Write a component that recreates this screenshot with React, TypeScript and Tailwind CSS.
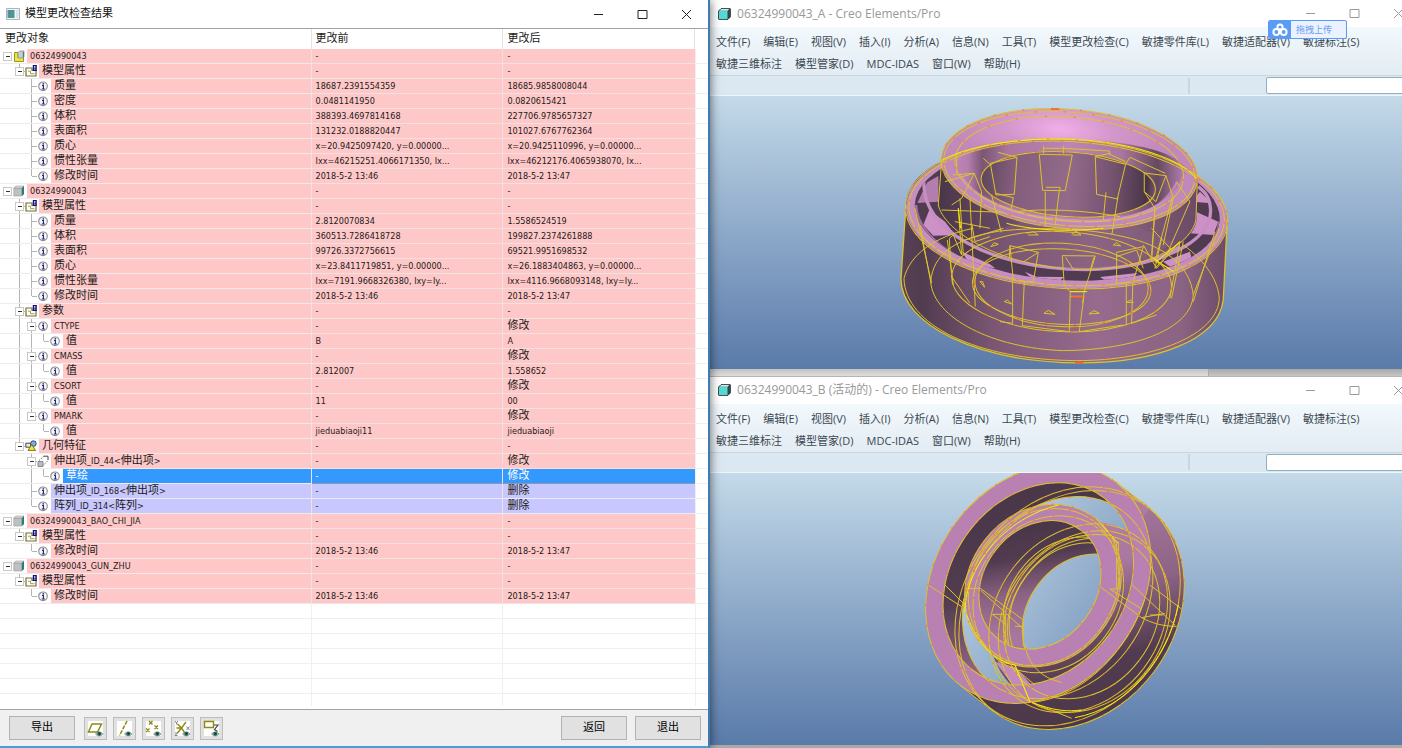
import React from "react";

type Kind = "asm" | "part" | "props" | "info" | "geom" | "extrude";
type Row = {
  level: number;
  kind: Kind;
  name: string;
  before: string;
  after: string;
  state?: "selected" | "removed";
};

const r = (
  level: number,
  kind: Kind,
  name: string,
  before = "-",
  after = "-",
  state?: "selected" | "removed"
): Row => ({ level, kind, name, before, after, state });

const rows: Row[] = [
  r(0, "asm", "06324990043"),
  r(1, "props", "模型属性"),
  r(2, "info", "质量", "18687.2391554359", "18685.9858008044"),
  r(2, "info", "密度", "0.0481141950", "0.0820615421"),
  r(2, "info", "体积", "388393.4697814168", "227706.9785657327"),
  r(2, "info", "表面积", "131232.0188820447", "101027.6767762364"),
  r(2, "info", "质心", "x=20.9425097420, y=0.00000...", "x=20.9425110996, y=0.00000..."),
  r(2, "info", "惯性张量", "Ixx=46215251.4066171350, Ix...", "Ixx=46212176.4065938070, Ix..."),
  r(2, "info", "修改时间", "2018-5-2 13:46", "2018-5-2 13:47"),
  r(0, "part", "06324990043"),
  r(1, "props", "模型属性"),
  r(2, "info", "质量", "2.8120070834", "1.5586524519"),
  r(2, "info", "体积", "360513.7286418728", "199827.2374261888"),
  r(2, "info", "表面积", "99726.3372756615", "69521.9951698532"),
  r(2, "info", "质心", "x=23.8411719851, y=0.00000...", "x=26.1883404863, y=0.00000..."),
  r(2, "info", "惯性张量", "Ixx=7191.9668326380, Ixy=Iy...", "Ixx=4116.9668093148, Ixy=Iy..."),
  r(2, "info", "修改时间", "2018-5-2 13:46", "2018-5-2 13:47"),
  r(1, "props", "参数"),
  r(2, "info", "CTYPE", "-", "修改"),
  r(3, "info", "值", "B", "A"),
  r(2, "info", "CMASS", "-", "修改"),
  r(3, "info", "值", "2.812007", "1.558652"),
  r(2, "info", "CSORT", "-", "修改"),
  r(3, "info", "值", "11", "00"),
  r(2, "info", "PMARK", "-", "修改"),
  r(3, "info", "值", "jieduabiaoji11", "jieduabiaoji"),
  r(1, "geom", "几何特征"),
  r(2, "extrude", "伸出项_ID_44<伸出项>", "-", "修改"),
  r(3, "info", "草绘", "-", "修改", "selected"),
  r(2, "info", "伸出项_ID_168<伸出项>", "-", "删除", "removed"),
  r(2, "info", "阵列_ID_314<阵列>", "-", "删除", "removed"),
  r(0, "part", "06324990043_BAO_CHI_JIA"),
  r(1, "props", "模型属性"),
  r(2, "info", "修改时间", "2018-5-2 13:46", "2018-5-2 13:47"),
  r(0, "part", "06324990043_GUN_ZHU"),
  r(1, "props", "模型属性"),
  r(2, "info", "修改时间", "2018-5-2 13:46", "2018-5-2 13:47"),
];

/** True when another node of the given level follows inside the same parent. */
function continues(index: number, level: number) {
  for (let i = index + 1; i < rows.length; i++) {
    if (rows[i].level < level) return false;
    if (rows[i].level === level) return true;
  }
  return false;
}

/** Chinese runs are set two pixels larger than the Latin ones beside them. */
function Mixed({ text }: { text: string }) {
  const runs = text.match(/[\u4e00-\u9fff]+|[^\u4e00-\u9fff]+/g) ?? [];
  return (
    <>
      {runs.map((run, i) =>
        /[\u4e00-\u9fff]/.test(run) ? (
          <span key={i} className="text-[11px]">
            {run}
          </span>
        ) : (
          run
        )
      )}
    </>
  );
}

function Slot({ up, down, right, box }: { up?: boolean; down?: boolean; right?: boolean; box?: boolean }) {
  return (
    <svg className="h-[15px] w-3 shrink-0" viewBox="0 0 12 15" shapeRendering="crispEdges" aria-hidden="true">
      {up && <path d="M6.5 0V7" stroke="#b4b4b4" />}
      {down && <path d="M6.5 7V15" stroke="#b4b4b4" />}
      {right && <path d="M6.5 7.5H12" stroke="#b4b4b4" />}
      {box && <rect x="2.5" y="3.5" width="8" height="8" fill="#fff" stroke="#c8c8c8" />}
      {box && <path d="M4.5 7.5H8.5" stroke="#333" />}
    </svg>
  );
}

function NodeIcon({ kind }: { kind: Kind }) {
  const c = "h-3 w-3 shrink-0";
  switch (kind) {
    case "asm":
      return (
        <svg className={c} viewBox="0 0 12 12" aria-hidden="true">
          <path d="M1.5 2.5h3.5v5h5.5v4H1.5z" fill="#f0e63a" stroke="#98931d" />
          <path d="M5 2.5L6.5 1H11v6L9.8 8H5z" fill="#c9ced2" stroke="#84909a" strokeWidth=".8" />
          <path d="M9.8 2.5V8L11 6.9V1.2z" fill="#51787f" />
        </svg>
      );
    case "part":
      return (
        <svg className={c} viewBox="0 0 12 12" aria-hidden="true">
          <path d="M.8 3h8v8h-8z" fill="#bfc1c1" stroke="#999" strokeWidth=".6" />
          <path d="M.8 3L2.6 1H11L8.8 3z" fill="#dcdcdc" stroke="#8b8b8b" strokeWidth=".5" />
          <path d="M8.8 3L11 1v8.2L8.8 11z" fill="#257e7d" />
        </svg>
      );
    case "props":
      return (
        <svg className={c} viewBox="0 0 12 12" aria-hidden="true">
          <path d="M1 3h6v2.5h4V11H1z" fill="#fffef0" stroke="#71713d" strokeWidth="1.2" />
          <path d="M3 6.2h2.5v2.500h4" stroke="#9a9a6d" fill="none" />
          <path d="M7.8 0H11.8V6H7.8z" fill="#101078" />
          <path d="M9.8 1v2.500M9.8 4.2V5" stroke="#fff" />
        </svg>
      );
    case "geom":
      return (
        <svg className={c} viewBox="0 0 12 12" aria-hidden="true">
          <path d="M.8 3.2h5v4h-5z" fill="#ececec" stroke="#333" strokeWidth=".9" />
          <circle cx="8.4" cy="3.6" r="2.8" fill="#7eaedd" stroke="#2b3f66" strokeWidth=".9" />
          <path d="M6.8 4.5L10.5 10.4H3z" fill="#ffe91d" stroke="#6a6020" strokeWidth=".9" />
        </svg>
      );
    case "extrude":
      return (
        <svg className={c} viewBox="0 0 12 12" aria-hidden="true">
          <path d="M1 6.5h5v5H1z" fill="#b9bcbc" stroke="#8a8a8a" />
          <path d="M2 5.5L7 1M6 10.5L11 5.5" stroke="#777" strokeDasharray="1.5 1" />
          <path d="M6.5 1.2H11V5" fill="none" stroke="#444" />
        </svg>
      );
    default:
      return (
        <svg className={c} viewBox="0 0 12 12" aria-hidden="true">
          <circle cx="6" cy="6.3" r="4.3" fill="#f4f5f9" stroke="#8c8c8c" strokeWidth="1.1" />
          <path d="M6.3 3.2v1.4" stroke="#1c2378" strokeWidth="1.5" />
          <path d="M5 5.5h1.4v3.3M4.8 9h3" stroke="#1c2378" strokeWidth="1.1" fill="none" />
        </svg>
      );
  }
}

function ValueCell({ text, row, last }: { text: string; row: Row; last?: boolean }) {
  const bg =
    row.state === "selected"
      ? "bg-[#3399ff] text-white border-b-[#8b99aa]"
      : row.state === "removed"
        ? "bg-[#c8c8ff] border-b-[#ececf4]"
        : "bg-[#ffc8c8] border-b-[#f1e2e2]";
  return (
    <td
      className={`h-[15px] overflow-hidden border-b p-0 pl-1 text-[9px] leading-[14px] whitespace-nowrap ${last ? "" : "border-r border-r-[#f1e2e2]"} ${bg}`}
    >
      <Mixed text={text} />
    </td>
  );
}

function TreeRow({ row, index }: { row: Row; index: number }) {
  const expandable = index + 1 < rows.length && rows[index + 1].level > row.level;
  const more = row.level > 0 && continues(index, row.level);
  const slots: React.ReactNode[] = [];
  for (let k = 0; k < row.level; k++) {
    const line = k > 0 && continues(index, k);
    slots.push(<Slot key={k} up={line} down={line} />);
  }
  slots.push(
    <Slot key="node" up={row.level > 0} down={more} right={row.level > 0} box={expandable} />
  );
  const bg =
    row.state === "selected"
      ? "bg-[#3399ff] text-white"
      : row.state === "removed"
        ? "bg-[#c8c8ff]"
        : "bg-[#ffc8c8]";
  return (
    <tr>
      <td className="h-[15px] overflow-hidden border-r border-b border-r-[#f1e2e2] border-b-[#f0eaea] p-0">
        <div className="flex h-[14px] items-center pl-px">
          {slots}
          <NodeIcon kind={row.kind} />
          <span
            className={`ml-[2px] h-[14px] flex-1 overflow-hidden pl-[3px] text-[9px] leading-[14px] whitespace-nowrap ${bg}`}
          >
            <Mixed text={row.name} />
          </span>
        </div>
      </td>
      <ValueCell text={row.before} row={row} />
      <ValueCell text={row.after} row={row} last />
      <td className="border-b border-l border-[#f0f0f0] p-0" />
    </tr>
  );
}

function WindowButtons({ tone }: { tone: string }) {
  const b = "flex h-6 w-11 items-center justify-center";
  return (
    <div className={`flex shrink-0 ${tone}`}>
      <button className={b} aria-label="最小化">
        <svg width="11" height="11" viewBox="0 0 11 11" stroke="currentColor"><path d="M1 5.5h9" /></svg>
      </button>
      <button className={b} aria-label="最大化">
        <svg width="11" height="11" viewBox="0 0 11 11" stroke="currentColor" fill="none"><path d="M1 1.5h9v8H1z" /></svg>
      </button>
      <button className={b} aria-label="关闭">
        <svg width="11" height="11" viewBox="0 0 11 11" stroke="currentColor"><path d="M1 1l9 9M10 1l-9 9" /></svg>
      </button>
    </div>
  );
}

function Eye() {
  return (
    <g>
      <path d="M8.5 14c1.5-2.8 6-2.8 7.5 0c-1.5 2.600-6 2.600-7.5 0z" fill="#b9bdc4" stroke="#777" strokeWidth=".6" />
      <circle cx="12.300" cy="13.700" r="2" fill="#14704a" />
      <circle cx="12.300" cy="13.700" r=".8" fill="#123" />
    </g>
  );
}

const tools: { label: string; art: React.ReactNode }[] = [
  { label: "基准平面显示", art: <path d="M5 4H14.5L10.5 12H1.5z" fill="none" stroke="#8c8a12" strokeWidth="1.500" /> },
  { label: "基准轴显示", art: <path d="M11 1L3.500 15.500" stroke="#8c8a12" strokeWidth="1.500" strokeDasharray="4 1.200" /> },
  {
    label: "基准点显示",
    art: <path d="M4 1l3.500 3.500M7.500 1l-3.500 3.500M9.500 5.500l3.500 3.500M13 5.500l-3.500 3.500M1 8.500l3.500 3.500M4.500 8.500l-3.500 3.500" stroke="#8c8a12" strokeWidth="1.400" />,
  },
  {
    label: "坐标系显示",
    art: (
      <g fill="none">
        <path d="M7.5 8L12 2M7.5 8L3.500 4M7.5 8L3.500 13M2.500 8h5l3 4.500" stroke="#8c8a12" strokeWidth="1.400" />
        <path d="M1 1l1.500 2L4 1M2.500 3v1.500M12.500 6.500l3 3.500M15.500 6.500l-3 3.500M1 13h2.500L1 15.500h2.500" stroke="#777" strokeWidth=".9" />
      </g>
    ),
  },
  {
    label: "注释显示",
    art: (
      <g fill="none">
        <path d="M1.500 1.500h9v6h-9z" stroke="#8c8a12" strokeWidth="1.400" />
        <path d="M11 5h4L11.500 9.500l3 2" stroke="#444" strokeWidth="1.200" />
      </g>
    ),
  },
];

function CompareDialog() {
  const push =
    "h-6 w-[66px] border border-[#b2b2b2] bg-[#e1e1e1] text-center text-[11px] leading-5 text-black";
  return (
    <section className="relative z-10 flex w-[50.65%] shrink-0 flex-col border-r-2 border-b-2 border-r-[#3f7bb0] border-b-[#4d9ad5] bg-white shadow-[0_0_10px_rgba(0,0,0,0.6)]">
      <header className="flex h-7 items-center justify-between">
        <div className="flex items-center gap-1 pl-[6px]">
          <svg width="15" height="12" viewBox="0 0 15 12" aria-hidden="true">
            <defs>
              <linearGradient id="app" x1="0" x2="1" y2="1">
                <stop offset="0" stopColor="#5d86b3" />
                <stop offset="1" stopColor="#44a17c" />
              </linearGradient>
            </defs>
            <path d="M.5.5h13v11H.5z" fill="#f2f4f6" stroke="#a9b5bd" />
            <path d="M1.500 2h7v8h-7z" fill="url(#app)" />
            <path d="M10 2h2.500v8H10z" fill="#dce4ea" />
          </svg>
          <h1 className="text-[11px] text-[#111]">模型更改检查结果</h1>
        </div>
        <WindowButtons tone="text-[#222]" />
      </header>
      <div className="flex-1 overflow-hidden border-t border-b border-t-[#a3a1ab] border-b-[#a0a3a8]">
        <table className="w-full table-fixed border-separate border-spacing-0 text-[#1a1a1a]">
          <colgroup>
            <col className="w-[44%]" />
            <col className="w-[27.1%]" />
            <col className="w-[27.1%]" />
            <col />
          </colgroup>
          <thead>
            <tr className="text-left text-[11px]">
              <th className="h-5 border-r border-[#e3e3e3] p-0 pl-[5px] leading-5 font-normal">更改对象</th>
              <th className="border-r border-[#e3e3e3] p-0 pl-1 leading-5 font-normal">更改前</th>
              <th className="border-r border-[#e3e3e3] p-0 pl-1 leading-5 font-normal">更改后</th>
              <th className="p-0" />
            </tr>
          </thead>
          <tbody>
            {rows.map((row, i) => (
              <TreeRow key={i} row={row} index={i} />
            ))}
            {Array.from({ length: 6 }, (_, i) => (
              <tr key={`blank-${i}`}>
                <td className="h-[15px] border-r border-b border-[#f0f0f0] p-0" />
                <td className="border-r border-b border-[#f0f0f0] p-0" />
                <td className="border-b border-[#f0f0f0] p-0" />
                <td className="border-b border-l border-[#f0f0f0] p-0" />
              </tr>
            ))}
            <tr>
              <td className="h-3 border-r border-[#f0f0f0] p-0" />
              <td className="border-r border-[#f0f0f0] p-0" />
              <td className="p-0" />
              <td className="border-l border-[#f0f0f0] p-0" />
            </tr>
          </tbody>
        </table>
      </div>
      <footer className="flex items-center bg-[#f0f0f0] py-[6px] pr-[7px] pl-[9px]">
        <button className={push}>导出</button>
        <div className="ml-2 flex gap-[6px] pl-px">
          {tools.map((t) => (
            <button
              key={t.label}
              aria-label={t.label}
              className="flex h-[23px] w-[23px] items-center justify-center border border-[#bcbcbc] bg-[#e1e1e1]"
            >
              <svg width="17" height="17" viewBox="0 0 17 17" aria-hidden="true">
                <rect x="1" y="1" width="15" height="15" fill="#fff" />
                {t.art}
                <Eye />
              </svg>
            </button>
          ))}
        </div>
        <div className="ml-auto flex gap-2">
          <button className={push}>返回</button>
          <button className={push}>退出</button>
        </div>
      </footer>
    </section>
  );
}

const menu = [
  "文件(F)",
  "编辑(E)",
  "视图(V)",
  "插入(I)",
  "分析(A)",
  "信息(N)",
  "工具(T)",
  "模型更改检查(C)",
  "敏捷零件库(L)",
  "敏捷适配器(V)",
  "敏捷标注(S)",
  "敏捷三维标注",
  "模型管家(D)",
  "MDC-IDAS",
  "窗口(W)",
  "帮助(H)",
];

function CreoWindow({ title, children }: { title: string; children: React.ReactNode }) {
  return (
    <section className="flex flex-1 flex-col overflow-hidden bg-white">
      <header className="flex h-[27px] items-center justify-between">
        <div className="flex items-center gap-[6px] pl-2 whitespace-nowrap">
          <svg width="13" height="12" viewBox="0 0 13 12" aria-hidden="true">
            <path d="M.7 3L3 .7h9.300V9l-2.300 2.300H.7z" fill="#2f4a4c" stroke="#263637" />
            <path d="M1 3h8.500v8H1z" fill="#55d9d6" />
            <path d="M1.500 2.700L3.200 1h8L9.500 2.700z" fill="#cdeeee" />
          </svg>
          <h2 className="text-[12px] text-[#999]">{title}</h2>
        </div>
        <div className="-mr-[18px]">
          <WindowButtons tone="text-[#9a9a9a]" />
        </div>
      </header>
      <nav className="flex flex-wrap content-start gap-x-[13px] border-b border-[#c9d6df] bg-linear-to-b from-[#f2f9fd] to-[#e3ecf3] pt-1 pl-[6px]">
        {menu.map((m) => (
          <a key={m} href="#" className="h-[22px] text-[11px] leading-[22px] whitespace-nowrap text-[#3b4750]">
            {m}
          </a>
        ))}
      </nav>
      <div className="flex h-5 items-center border-b border-[#eef6fb] bg-[#dbe8f2]">
        <div className="h-4 w-[69.400%] border-r-2 border-[#c9d5df]" />
        <input
          aria-label="搜索"
          className="-mr-1 ml-auto h-[17px] w-[20.300%] rounded-xs border border-[#8fb0c4] bg-white px-1 text-[11px]"
        />
      </div>
      <div className="flex flex-1 items-center overflow-hidden bg-linear-to-b from-[#c4dae9] to-[#5a7aa9]">{children}</div>
    </section>
  );
}

const Y = "#dcc32c";

type E = [number, number, number, number, number];
const El = ({ e, ...p }: { e: E } & React.SVGProps<SVGEllipseElement>) => (
  <ellipse cx={e[0]} cy={e[1]} rx={e[2]} ry={e[3]} transform={`rotate(${e[4]} ${e[0]} ${e[1]})`} {...p} />
);

const wiresA: E[] = [
  [530, 357, 484, 224, 3],
  [530, 355, 474, 216, 3],
  [538, 222, 386, 179, 5],
  [538, 222, 378, 170, 5],
  [538, 222, 344, 156, 5],
  [535, 268, 262, 97, 4],
  [515, 575, 268, 113, 3],
  [515, 570, 260, 125, 3],
  [515, 560, 330, 150, 3],
];

function BearingA() {
  return (
    <svg className="block w-full" viewBox="-540 3 2076 816" role="img" aria-label="06324990043_A">
      <defs>
        <linearGradient id="a-body">
          <stop offset="0" stopColor="#5a4257" />
          <stop offset=".06" stopColor="#503b4f" />
          <stop offset=".3" stopColor="#7d5875" />
          <stop offset=".6" stopColor="#966b8d" />
          <stop offset=".86" stopColor="#8b6383" />
          <stop offset="1" stopColor="#6b4c67" />
        </linearGradient>
        <linearGradient id="a-hole">
          <stop offset="0" stopColor="#5e465a" />
          <stop offset=".18" stopColor="#835d7c" />
          <stop offset=".5" stopColor="#936a8a" />
          <stop offset=".75" stopColor="#755370" />
          <stop offset=".95" stopColor="#493548" />
          <stop offset="1" stopColor="#765370" />
        </linearGradient>
        <linearGradient id="a-inner">
          <stop offset="0" stopColor="#493649" />
          <stop offset=".35" stopColor="#745270" />
          <stop offset=".6" stopColor="#906788" />
          <stop offset="1" stopColor="#6b4b67" />
        </linearGradient>
        <radialGradient id="a-cone" gradientUnits="userSpaceOnUse" cx="500" cy="104" r="330" gradientTransform="translate(0 62) scale(1 .4)">
          <stop offset="0" stopColor="#f0aee6" />
          <stop offset=".5" stopColor="#d396cb" />
          <stop offset="1" stopColor="#c188bb" />
        </radialGradient>
        <linearGradient id="a-throat">
          <stop offset="0" stopColor="#c188bb" />
          <stop offset=".07" stopColor="#b47dad" />
          <stop offset=".13" stopColor="#7a5674" />
          <stop offset=".24" stopColor="#a9769f" />
          <stop offset=".5" stopColor="#bd84b6" />
          <stop offset=".72" stopColor="#a9769f" />
          <stop offset=".87" stopColor="#65495f" />
          <stop offset="1" stopColor="#c188bb" />
        </linearGradient>
        <clipPath id="a-groove">
          <El e={[532, 352, 458, 204, 3]} />
        </clipPath>
      </defs>

      <path
        d="M48 330L33 552C35 690 260 802 570 804C800 804 985 735 1000 615L1012 375C1000 220 700 120 480 131C220 140 50 220 48 330Z"
        fill="url(#a-body)"
      />
      <El e={[530, 357, 482, 222, 3]} fill="#c58dc0" />
      <El e={[532, 352, 458, 204, 3]} fill="#503b50" />
      <g clipPath="url(#a-groove)">
        <g fill="#cd91c8">
          <path d="M112 262L150 240L146 320L82 324Z" fill="#b37dad" />
          <path d="M118 345L165 380L196 420L130 422L100 390Z" />
          <path d="M930 290L966 325L905 320Z" />
          <path d="M918 350L985 380L970 420L900 415Z" />
          <path d="M216 470L300 508L316 520L240 510Z" />
          <path d="M405 530L440 545L522 546L505 562L430 556Z" />
          <path d="M630 546L742 534L725 553L655 563Z" />
          <path d="M820 500L900 470L905 490L840 515Z" />
          <path d="M770 490L870 445L870 465L800 500Z" />
        </g>
        <path d="M145 210L146 340C170 430 350 523 590 525C780 520 915 450 921 370L921 250Z" fill="url(#a-inner)" />
        <path
          d="M102 262C95 400 290 520 590 524C810 518 965 440 962 345C960 310 950 295 925 275"
          fill="none"
          stroke="#c68fc1"
          strokeWidth="10"
        />
        <path d="M78 330C80 450 290 566 560 570C790 570 985 490 988 380" fill="none" stroke="#9e7198" strokeWidth="8" />
      </g>
      <path d="M400 380C500 340 640 345 750 400L850 440C780 500 680 522 560 521C440 515 300 480 230 430Z" fill="#886180" opacity=".5" />

      <El e={[538, 222, 385, 179, 5]} fill="url(#a-cone)" />
      <path
        d="M185 225C200 165 330 133 500 133C700 133 870 165 895 232C890 330 720 385 560 380C380 370 190 330 185 225Z"
        fill="url(#a-throat)"
      />
      <El e={[535, 268, 262, 99, 4]} fill="url(#a-hole)" />
      <path d="M190 240C230 320 380 385 580 388C740 388 860 340 888 250" fill="none" stroke="#c188bb" strokeWidth="26" strokeLinecap="round" />
      <path d="M210 240C260 320 390 373 580 379C730 379 820 345 860 265" fill="none" stroke="#d79bd0" strokeWidth="9" opacity=".6" strokeLinecap="round" />

      <g fill="none" stroke={Y} strokeWidth="3">
        {wiresA.map((e, i) => (
          <El key={i} e={e} />
        ))}
        <path d="M48 330L33 552C35 690 260 802 570 804C800 804 985 735 1000 615L1012 375" strokeWidth="4" />
        <path d="M42 550C60 480 130 425 250 400M42 550C45 690 260 795 560 797C790 797 985 720 988 610C985 560 950 500 880 450" />
        <path d="M155 195L145 330C160 400 300 500 520 520M922 265L918 375C905 440 800 515 600 525" />
        <path d="M90 390L122 560C130 670 310 760 520 767C740 765 905 700 910 600L988 400" />
        <path d="M122 560C130 480 190 430 330 408C450 395 600 400 700 425C820 450 900 510 910 600" />
        <path d="M75 340L125 565M975 410L910 620M172 435L190 570M880 440L845 610" />
        <path d="M448 178L547 180L526 287L458 286ZM468 277H510V287M466 290V392M508 288L495 392M461 152V176M521 152V176M461 160H521" />
        <path d="M301 205L381 187L373 298L318 300ZM318 295L370 308M305 300L334 412M370 308L363 345M280 190L300 208M324 172L381 187" />
        <path d="M616 185L707 208L682 312L620 298ZM616 185L660 175L658 168L521 160M648 292L640 375M684 306L666 418M707 208L720 187L826 235M655 176L707 200" />
        <path d="M763 234L828 242L798 320L763 290ZM828 242L850 310L820 450M860 260L900 320L830 480M763 290L795 340L785 480" />
        <path d="M165 260L253 235L215 310L185 330M253 235L275 290L270 400M210 310L220 480M240 310L256 635M200 180V235M155 345L340 352M190 240L250 235" />
        <path d="M205 340L215 480L190 420L178 430L185 545L240 625M195 380L300 400M225 435L340 400M245 385L255 440L300 425" />
        <path d="M360 452L445 472L430 560H405L370 555ZM368 555V685L330 680M403 560L397 692L538 710L541 590M445 472L402 500M360 452L358 490" />
        <path d="M517 482L616 483L583 590H541L523 572ZM527 487L550 523H602L612 487M541 604H582L568 710L700 690M583 590L578 625" />
        <path d="M680 472L760 455L730 560L680 566ZM709 560V690M729 555L725 685L800 660M680 485L740 465L760 520M760 450L800 520L870 440" />
        <path d="M795 340L785 500M848 305L795 500L840 520M870 440L840 610M815 430L795 520L870 440M785 400L850 470" />
        <path d="M410 415L430 410L445 420H415M545 418L558 408L573 420H548M670 450L680 443L692 453ZM303 455L312 443L325 448ZM462 655L475 646L495 658ZM597 657L612 647L628 655ZM343 620L352 615L365 627ZM710 622L722 615L730 623ZM270 560L278 560L284 577Z" />
        <path d="M380 350C460 340 580 345 690 365" />
      </g>
      <g fill="none" stroke="#f8f000" strokeWidth="3">
        <path d="M157 195C250 145 420 125 570 134C730 145 870 190 920 250" />
        <path d="M350 385C420 405 540 412 640 400M205 340L212 400M800 500L870 440M540 590H592M790 490L850 530" />
      </g>
      <g fill="none" stroke="#ff5a28" strokeWidth="2" strokeDasharray="7 80">
        {wiresA.map((e, i) => (
          <El key={i} e={e} />
        ))}
        <path d="M484 42H508M545 606H580M555 803H580" strokeDasharray="none" strokeWidth="5" />
      </g>
    </svg>
  );
}

const R = -53;
const outerB: E[] = [
  [370, 357, 384, 309, R],
  [370, 357, 325, 261, R],
  [470, 435, 384, 309, R],
  [384, 362, 256, 222, R],
  [386, 366, 248, 212, R],
  [375, 360, 205, 169, R],
];
const surfaceB: E[] = [
  [458, 424, 384, 309, R],
  [428, 398, 325, 261, R],
  [400, 388, 248, 212, R],
  [500, 455, 262, 217, R],
  [490, 460, 302, 247, R],
  [508, 470, 290, 238, R],
];
const boreB: E[] = [
  [505, 460, 205, 169, R],
  [480, 442, 222, 182, R],
  [495, 450, 246, 200, R],
  [462, 425, 222, 182, R],
];

function BearingB() {
  return (
    <svg className="block w-full" viewBox="-615 21 2076 819" role="img" aria-label="06324990043_B">
      <defs>
        <linearGradient id="b-sky" gradientUnits="userSpaceOnUse" x1="0" x2="0" y1="21" y2="840">
          <stop offset="0" stopColor="#c4dae9" />
          <stop offset="1" stopColor="#5a7aa9" />
        </linearGradient>
        <linearGradient id="b-body" gradientUnits="userSpaceOnUse" x1="360" y1="780" x2="780" y2="250">
          <stop offset="0" stopColor="#4b374a" />
          <stop offset=".25" stopColor="#513b50" />
          <stop offset=".55" stopColor="#8d6485" />
          <stop offset="1" stopColor="#ad7ca5" />
        </linearGradient>
        <linearGradient id="b-wall" gradientUnits="userSpaceOnUse" x1="400" y1="70" x2="130" y2="430">
          <stop offset="0" stopColor="#4b374a" />
          <stop offset=".5" stopColor="#523c50" />
          <stop offset="1" stopColor="#8e6687" />
        </linearGradient>
        <linearGradient id="b-bore" gradientUnits="userSpaceOnUse" x1="450" y1="200" x2="240" y2="420">
          <stop offset="0" stopColor="#4b374a" />
          <stop offset=".25" stopColor="#513b50" />
          <stop offset=".6" stopColor="#8a6282" />
          <stop offset="1" stopColor="#a8779f" />
        </linearGradient>
        <linearGradient id="b-cone" gradientUnits="userSpaceOnUse" x1="370" y1="640" x2="640" y2="260">
          <stop offset="0" stopColor="#4b374a" />
          <stop offset=".35" stopColor="#6e4f69" />
          <stop offset=".7" stopColor="#a8779f" />
          <stop offset="1" stopColor="#b37caa" />
        </linearGradient>
        <clipPath id="b-front"><El e={[370, 357, 325, 261, R]} /></clipPath>
        <clipPath id="b-eye"><El e={[375, 360, 205, 169, R]} /></clipPath>
      </defs>
      <El e={[470, 435, 384, 309, R]} fill="url(#b-body)" />
      <path d="M604 52L704 130L236 740L136 662Z" fill="url(#b-body)" />
      <El e={[370, 357, 384, 309, R]} fill="#b981b2" />
      <El e={[370, 357, 325, 261, R]} fill="url(#b-wall)" />
      <g clipPath="url(#b-front)">
        <El e={[428, 398, 325, 261, R]} fill="url(#b-sky)" />
        <El e={[430, 400, 262, 228, R]} fill="url(#b-cone)" />
        <El e={[480, 442, 290, 235, R]} fill="url(#b-cone)" />
        <path d="M240 590L300 606L350 660L300 670Z" fill="#c489bd" />
      </g>
      <El e={[384, 362, 256, 222, R]} fill="#b981b2" />
      <El e={[375, 360, 205, 169, R]} fill="url(#b-bore)" />
      <g clipPath="url(#b-eye)">
        <El e={[505, 460, 205, 169, R]} fill="url(#b-sky)" />
      </g>
      <g fill="none" stroke={Y} strokeWidth="3">
        {[...outerB, ...surfaceB].map((e, i) => (
          <El key={i} e={e} />
        ))}
        <g clipPath="url(#b-eye)">
          {boreB.map((e, i) => (
            <El key={i} e={e} />
          ))}
        </g>
        <path d="M604 52L704 130M136 662L236 740" />
        <path d="M40 360L155 435M90 360L155 425M158 370H196L325 465M197 376L325 492M232 448H275M232 448L275 480M272 448V540M300 484H325" />
        <path d="M555 365L680 458C710 475 750 485 785 484M585 372L680 432M585 372H615L610 230M652 360L780 480M705 360L800 432M680 458L750 445M560 175L605 235V370M705 450H745" />
        <path d="M325 465V545M330 540C340 600 380 640 440 652M240 590C260 650 300 690 350 712L470 760M250 590L300 600L345 712M300 610L360 660" />
        <path d="M350 712C500 700 640 560 690 400" />
      </g>
      <g fill="none" stroke="#f8f000" strokeWidth="3">
        <path d="M150 440C150 330 240 170 430 120M560 180L610 235M155 450C190 540 240 590 300 600L345 710C420 740 460 740 500 735M790 420C760 580 640 730 480 758" />
      </g>
      <g fill="none" stroke="#ff5a28" strokeWidth="2" strokeDasharray="6 56">
        {[...outerB, ...surfaceB].map((e, i) => (
          <El key={i} e={e} />
        ))}
      </g>
    </svg>
  );
}

export default function App() {
  return (
    <main className="flex min-h-screen w-full overflow-hidden bg-[#a9a9a9] font-['DejaVu_Sans_Condensed','Noto_Sans_CJK_SC',sans-serif]">
      <CompareDialog />
      <div className="relative flex min-w-0 flex-1 flex-col pb-[3px] font-['Open_Sans','Noto_Sans_CJK_SC',sans-serif]">
        <CreoWindow title="06324990043_A - Creo Elements/Pro">
          <BearingA />
        </CreoWindow>
        <div className="flex h-2 border-b border-[#b5b5b5] bg-linear-to-b from-[#c2c2c2] to-[#dedede]">
          <div className="ml-auto w-[28%] border-l border-[#aaa] bg-linear-to-b from-[#a9a9a9] to-[#c6c6c6]" />
        </div>
        <CreoWindow title="06324990043_B (活动的) - Creo Elements/Pro">
          <BearingB />
        </CreoWindow>
        <button className="absolute top-5 right-[55px] flex h-[19px] w-[79px] items-center overflow-hidden rounded-xs border border-[#5b9bf8] bg-[#e9f2fe] text-[9px] text-[#6d9cf3]">
          <span className="flex h-full w-[22px] items-center justify-center bg-[#5b9bf8]">
            <svg width="16" height="14" viewBox="0 0 16 14" fill="none" stroke="#fff" strokeWidth="2" aria-hidden="true">
              <circle cx="8" cy="4" r="2.600" />
              <circle cx="4.300" cy="9" r="2.900" />
              <circle cx="11.700" cy="9" r="2.900" />
            </svg>
          </span>
          <span className="pl-[5px]">拖拽上传</span>
        </button>
      </div>
    </main>
  );
}
